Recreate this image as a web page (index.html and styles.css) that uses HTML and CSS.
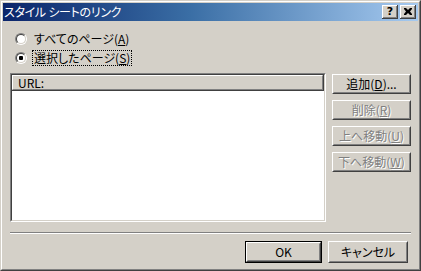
FILE: index.html
```html
<!DOCTYPE html>
<html lang="ja">
<head>
<meta charset="utf-8">
<link rel="stylesheet" href="styles.css">
</head>
<body>
<div class="window">
  <div class="frame">
    <div class="titlebar">
      <span class="title">スタイル シートのリンク</span>
      <div class="tbtns">
        <div class="tbtn help">?</div>
        <div class="tbtn close">
          <svg width="8" height="7" viewBox="0 0 8 7"><path d="M0 0h2l2 2 2-2h2v1L6 3.5 8 6v1H6L4 5 2 7H0V6l2-2.5L0 1z" fill="#000"/></svg>
        </div>
      </div>
    </div>
    <div class="content">
      <div class="radios">
        <div class="radio"><span class="rb"><span class="rbi"></span></span><span class="rl">すべてのページ(<u>A</u>)</span></div>
        <div class="radio"><span class="rb"><span class="rbi"><span class="dot"></span></span></span><span class="rl focus">選択したページ(<u>S</u>)</span></div>
      </div>
      <div class="main">
        <div class="listbox">
          <div class="lb-inner">
            <div class="lhead"><div class="lhead-in">URL:</div></div>
            <div class="lbody"></div>
          </div>
        </div>
        <div class="side">
          <div class="btn"><div class="btn-in">追加(<u>D</u>)...</div></div>
          <div class="btn disabled"><div class="btn-in">削除(<u>R</u>)</div></div>
          <div class="btn disabled"><div class="btn-in">上へ移動(<u>U</u>)</div></div>
          <div class="btn disabled"><div class="btn-in">下へ移動(<u>W</u>)</div></div>
        </div>
      </div>
      <div class="sep"></div>
      <div class="footer">
        <div class="default"><div class="btn wide"><div class="btn-in">OK</div></div></div>
        <div class="btn wide"><div class="btn-in">キャンセル</div></div>
      </div>
    </div>
  </div>
</div>
</body>
</html>
```

FILE: styles.css
```css
* { box-sizing: border-box; }
html, body { margin: 0; padding: 0; background: #d4d0c8; }
body {
  font-family: "Noto Sans CJK JP", "Noto Sans", sans-serif;
  font-size: 12px;
  color: #000;
  font-feature-settings: "palt";
}
u { text-decoration: underline; text-underline-offset: 1px; }

.window {
  width: 421px;
  height: 271px;
  border: 1px solid;
  border-color: #d4d0c8 #404040 #404040 #d4d0c8;
  background: #d4d0c8;
}
.frame {
  height: 100%;
  border: 1px solid;
  border-color: #fff #808080 #808080 #fff;
  padding: 1px;
  display: flex;
  flex-direction: column;
}
.titlebar {
  height: 18px;
  background: linear-gradient(to right, #0a246a 0%, #3a6ea5 45%, #a6caf0 100%);
  display: flex;
  align-items: center;
  justify-content: space-between;
  padding: 0 2px 0 1px;
}
.title {
  color: #fff;
  font-size: 12px;
  line-height: 18px;
  letter-spacing: -0.3px;
  white-space: nowrap;
}
.tbtns { display: flex; gap: 2px; }
.tbtn {
  width: 16px;
  height: 14px;
  background: #d4d0c8;
  box-shadow: inset -1px -1px #404040, inset 1px 1px #fff, inset -2px -2px #808080;
  display: flex;
  align-items: center;
  justify-content: center;
}
.tbtn.help {
  font-family: "DejaVu Sans", sans-serif;
  font-weight: bold;
  font-size: 11px;
  line-height: 14px;
  padding-bottom: 1px;
}
.tbtn.close svg { margin-top: -1px; }

.content {
  flex: 1;
  display: flex;
  flex-direction: column;
  padding: 0 7px;
}
.radios {
  margin-top: 8px;
  display: flex;
  flex-direction: column;
}
.radio {
  height: 19px;
  display: flex;
  align-items: center;
  padding-left: 5px;
}
.rb {
  width: 12px;
  height: 12px;
  border-radius: 50%;
  border: 1px solid;
  border-color: #808080 #fff #fff #808080;
  display: flex;
}
.rbi {
  flex: 1;
  border-radius: 50%;
  border: 1px solid;
  border-color: #404040 #d4d0c8 #d4d0c8 #404040;
  background: #fff;
  display: flex;
  align-items: center;
  justify-content: center;
}
.dot {
  width: 4px;
  height: 4px;
  background: #000;
  border-radius: 1px;
}
.rl {
  margin-left: 5px;
  line-height: 14px;
  padding: 0 1px;
  border: 1px solid transparent;
}
.rl.focus { border: 1px dotted #000; }

.main {
  margin-top: 6px;
  display: flex;
  gap: 6px;
}
.listbox {
  width: 316px;
  height: 149px;
  border: 1px solid;
  border-color: #808080 #fff #fff #808080;
}
.lb-inner {
  height: 100%;
  border: 1px solid;
  border-color: #404040 #d4d0c8 #d4d0c8 #404040;
  background: #fff;
  display: flex;
  flex-direction: column;
}
.lhead {
  height: 16px;
  background: #d4d0c8;
  border-right: 1px solid #404040;
  border-bottom: 1px solid #404040;
}
.lhead-in {
  height: 100%;
  border: 1px solid;
  border-color: #fff #808080 #808080 #fff;
  padding-left: 5px;
  line-height: 13px;
}
.lbody { flex: 1; background: #fff; }

.side {
  width: 79px;
  display: flex;
  flex-direction: column;
  gap: 6px;
  padding-top: 1px;
}
.btn {
  height: 20px;
  background: #d4d0c8;
  border: 1px solid;
  border-color: #fff #404040 #404040 #fff;
}
.btn-in {
  height: 100%;
  border: 1px solid;
  border-color: #d4d0c8 #808080 #808080 #d4d0c8;
  display: flex;
  align-items: center;
  justify-content: center;
  line-height: 14px;
  white-space: nowrap;
}
.btn.disabled .btn-in {
  color: #808080;
  text-shadow: 1px 1px 0 #fff;
}

.sep {
  margin-top: 10px;
  height: 2px;
  border-top: 1px solid #808080;
  border-bottom: 1px solid #fff;
}
.footer {
  margin-top: 7px;
  display: flex;
  justify-content: flex-end;
  gap: 6px;
  padding-right: 3px;
}
.default {
  border: 1px solid #000;
}
.btn.wide { width: 77px; height: 21px; }
.default .btn.wide { width: 75px; height: 20px; }
.footer > .btn.wide { height: 22px; width: 80px; }
```
